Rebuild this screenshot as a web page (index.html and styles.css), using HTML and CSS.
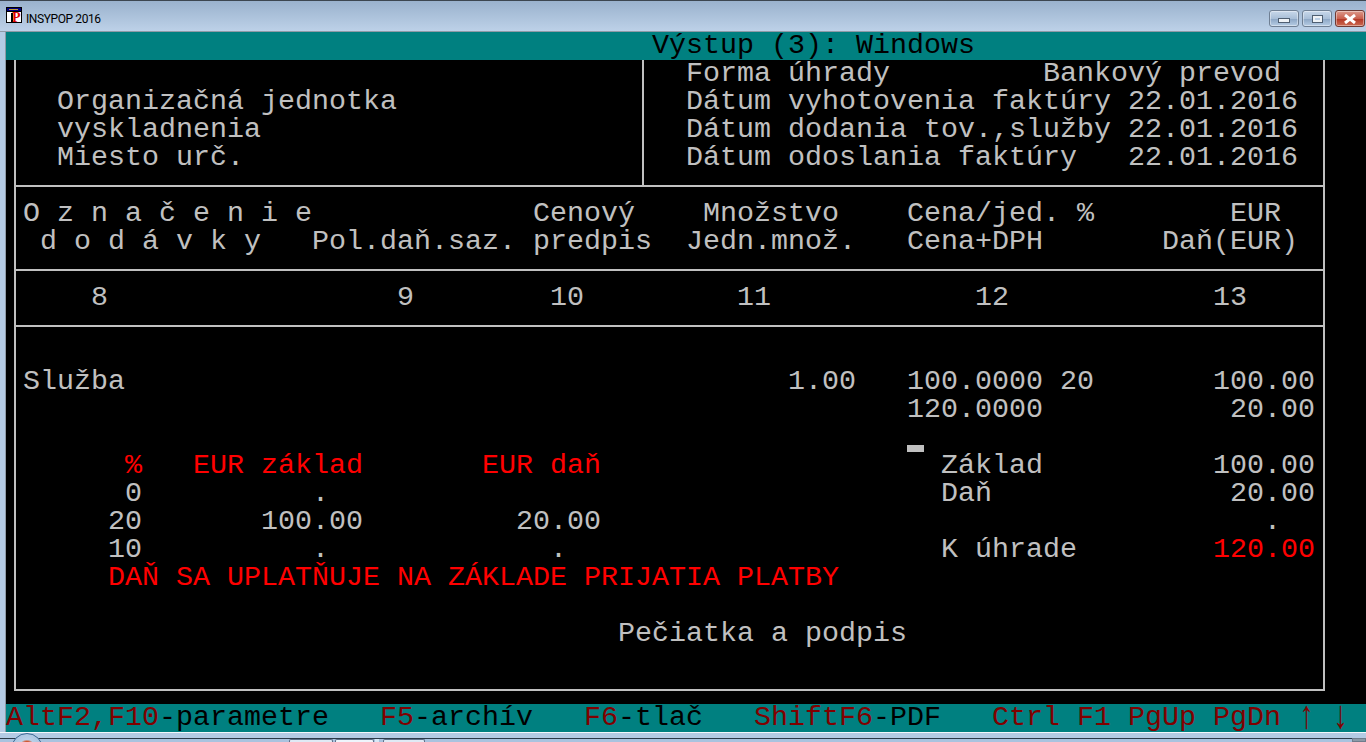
FILE: index.html
```html
<!DOCTYPE html>
<html>
  <head>
    <title>INSYPOP 2016</title>
    <link rel="stylesheet" href="styles.css">
  </head>
  <body>
    <div class="titlebar">
      <svg class="app-icon" width="16" height="16" viewBox="0 0 16 16">
        <rect x="0" y="0" width="16" height="16" fill="#000"/>
        <rect x="1" y="1" width="14" height="3" fill="#000080"/>
        <rect x="3" y="2" width="9" height="1" fill="#c0a040"/>
        <rect x="1" y="5" width="14" height="10" fill="#fff"/>
        <rect x="5" y="6" width="2" height="9" fill="#000"/>
        <text class="app-icon-letter" x="6" y="15">P</text>
      </svg>
      <span class="app-name">INSYPOP 2016</span>
      <div class="window-buttons">
        <div class="win-btn"><span class="glyph-min"></span></div>
        <div class="win-btn"><span class="glyph-max"></span></div>
        <div class="win-btn win-close">
          <svg width="14" height="10" viewBox="0 0 14 10">
            <path d="M2 1 L12 9 M12 1 L2 9" stroke="#fff" stroke-width="3" fill="none"/>
          </svg>
        </div>
      </div>
    </div>

    <div class="console">
      <div class="line bar-top">                                      Výstup (3): Windows</div>

      <div class="screen">
        <div class="frame">
          <div class="section section-head">
            <div class="pane-left">
              <div class="line"></div>
              <div class="line">  Organizačná jednotka</div>
              <div class="line">  vyskladnenia</div>
              <div class="line">  Miesto urč.</div>
            </div>
            <div class="pane-right">
              <div class="line">Forma úhrady         Bankový prevod</div>
              <div class="line">Dátum vyhotovenia faktúry 22.01.2016</div>
              <div class="line">Dátum dodania tov.,služby 22.01.2016</div>
              <div class="line">Dátum odoslania faktúry   22.01.2016</div>
            </div>
          </div>

          <div class="section">
            <div class="line">O z n a č e n i e             Cenový    Množstvo    Cena/jed. %        EUR</div>
            <div class="line"> d o d á v k y   Pol.daň.saz. predpis  Jedn.množ.   Cena+DPH       Daň(EUR)</div>
          </div>

          <div class="section">
            <div class="line">    8                 9        10         11            12            13</div>
          </div>

          <div class="section">
            <div class="line"></div>
            <div class="line">Služba                                       1.00   100.0000 20       100.00</div>
            <div class="line">                                                    120.0000           20.00</div>
            <div class="line line-cursor"><span class="cursor"></span></div>
            <div class="line">      <span class="red">%</span>   <span class="red">EUR základ</span>       <span class="red">EUR daň</span>                    Základ          100.00</div>
            <div class="line">      0          .                                    Daň              20.00</div>
            <div class="line">     20       100.00         20.00                                       .</div>
            <div class="line">     10          .             .                      K úhrade        <span class="red">120.00</span></div>
            <div class="line red">     DAŇ SA UPLATŇUJE NA ZÁKLADE PRIJATIA PLATBY</div>
            <div class="line"></div>
            <div class="line">                                   Pečiatka a podpis</div>
            <div class="line"></div>
          </div>
        </div>
      </div>

      <div class="line bar-bottom"><span class="key">AltF2,F10</span>-parametre   <span class="key">F5</span>-archív   <span class="key">F6</span>-tlač   <span class="key">ShiftF6</span>-PDF   <span class="key">Ctrl F1 PgUp PgDn <span class="arrow">↑</span> <span class="arrow">↓</span></span></div>
    </div>

    <div class="window-edge"></div>

    <div class="taskbar">
      <div class="start-orb"></div>
      <div class="task task-a"></div>
      <div class="task task-b"></div>
      <div class="task-sep"></div>
      <div class="task task-c"></div>
      <div class="tray"></div>
    </div>
  </body>
</html>
```

FILE: styles.css
```css
:root {
  --cell: 17px;
  --row: 28px;
  --rule: #c0c0c0;
}

html, body {
  margin: 0;
  padding: 0;
}

body {
  width: 1366px;
  height: 742px;
  overflow: hidden;
  position: relative;
  background: #b4cbe4;
}

/* window title */
.titlebar {
  height: 30px;
  display: flex;
  align-items: center;
  border-top: 1px solid #3c4650;
  background: linear-gradient(to bottom, #9ab2cd, #bdd1e8);
  border-bottom: 1px solid #8e9aa6;
  padding-left: 6px;
}

.app-icon {
  flex: none;
  margin-top: -2px;
}

.app-icon-letter {
  font-family: "Liberation Serif", serif;
  font-weight: bold;
  font-size: 14px;
  fill: #e00000;
}

.app-name {
  margin-left: 4px;
  margin-top: 6px;
  font-family: Roboto, sans-serif;
  font-size: 12px;
  letter-spacing: -0.4px;
  color: #000;
  white-space: nowrap;
}

.window-buttons {
  margin-left: auto;
  margin-top: 5px;
  margin-right: 1px;
  display: flex;
  gap: 3px;
}

.win-btn {
  width: 30px;
  height: 17px;
  display: flex;
  align-items: center;
  justify-content: center;
  border: 1px solid #6f7f93;
  border-radius: 3px;
  box-sizing: border-box;
  background: linear-gradient(to bottom, #c8d8ea 0%, #a9bfd8 50%, #8ea8c6 55%, #b6cce4 100%);
  box-shadow: inset 0 0 0 1px rgba(255, 255, 255, 0.4);
}

.win-close {
  background: linear-gradient(to bottom, #dc9a8c 0%, #c9604e 50%, #b43a28 55%, #cc6a52 100%);
  border-color: #6e3a34;
}

.glyph-min {
  display: block;
  width: 10px;
  height: 3px;
  margin-top: 4px;
  background: #eef2f6;
  border: 1px solid #4f5f72;
}

.glyph-max {
  display: block;
  width: 5px;
  height: 2px;
  background: #bcd0e6;
  border: 2px solid #eef2f6;
  outline: 1px solid #4f5f72;
}

/* text screen, 80 x 25 cells */
.console {
  margin-left: 6px;
  font-family: "Liberation Mono", monospace;
  font-size: 28.33px;
  font-variant-ligatures: none;
  color: var(--rule);
  box-shadow: -1px 0 0 #8e9aa6;
}

.line {
  height: var(--row);
  line-height: var(--row);
  white-space: pre;
}

.bar-top,
.bar-bottom {
  background: #008080;
  color: #000;
}

.key {
  color: #800000;
}

.arrow {
  display: inline-block;
  transform: scaleY(1.4);
}

.red {
  color: #ff0000;
}

.screen {
  background: #000;
  padding: 0 0 13px 8px;
}

.frame {
  width: 1311px;
  box-sizing: border-box;
  border-left: 2px solid var(--rule);
  border-right: 2px solid var(--rule);
  border-bottom: 2px solid var(--rule);
}

.section {
  padding: 13px 0 13px 7px;
  border-bottom: 2px solid var(--rule);
}

.section:last-child {
  border-bottom: 0;
}

.section-head {
  display: flex;
  padding: 0;
}

.pane-left {
  width: 619px;
  padding: 0 0 13px 7px;
}

.pane-right {
  padding: 0 0 13px 42px;
  border-left: 2px solid var(--rule);
}

.line-cursor {
  display: flex;
  align-items: flex-end;
  padding-left: calc(52 * var(--cell));
}

.cursor {
  width: var(--cell);
  height: 7px;
  background: var(--rule);
}

/* below the window */
.window-edge {
  height: 5px;
  margin-top: 1px;
  border-bottom: 1px solid #2c3a48;
  background: #b4cbe4;
}

.console + .window-edge {
  box-shadow: 0 -1px 0 #f4f8fc;
}

.taskbar {
  height: 3px;
  display: flex;
  padding-left: 289px;
  background: #a9c3df;
}

.start-orb {
  position: absolute;
  left: 11px;
  top: 733px;
  width: 32px;
  height: 32px;
  border-radius: 50%;
  border: 1px solid #3d6a94;
  box-sizing: border-box;
  background: radial-gradient(circle at 50% 45%, #d2562e 0, #d2562e 6px, #b9d0e8 8px, #9bb9d8 100%);
}

.task {
  height: 3px;
  border: 1px solid #5d7088;
  border-bottom: 0;
  border-radius: 2px 2px 0 0;
  box-sizing: border-box;
  background: #dfeaf5;
}

.task-a {
  width: 44px;
}

.task-b {
  width: 39px;
  margin-left: 2px;
  background: #eef5fc;
}

.task-sep {
  width: 4px;
  margin-left: 1px;
  background: #d8e8f6;
}

.task-c {
  width: 42px;
  margin-left: 4px;
}

.tray {
  margin-left: auto;
  width: 14px;
  height: 4px;
  margin-top: -1px;
  background: #8c9aa8;
  border: 1px solid #6f7d8c;
  box-sizing: border-box;
}
```
